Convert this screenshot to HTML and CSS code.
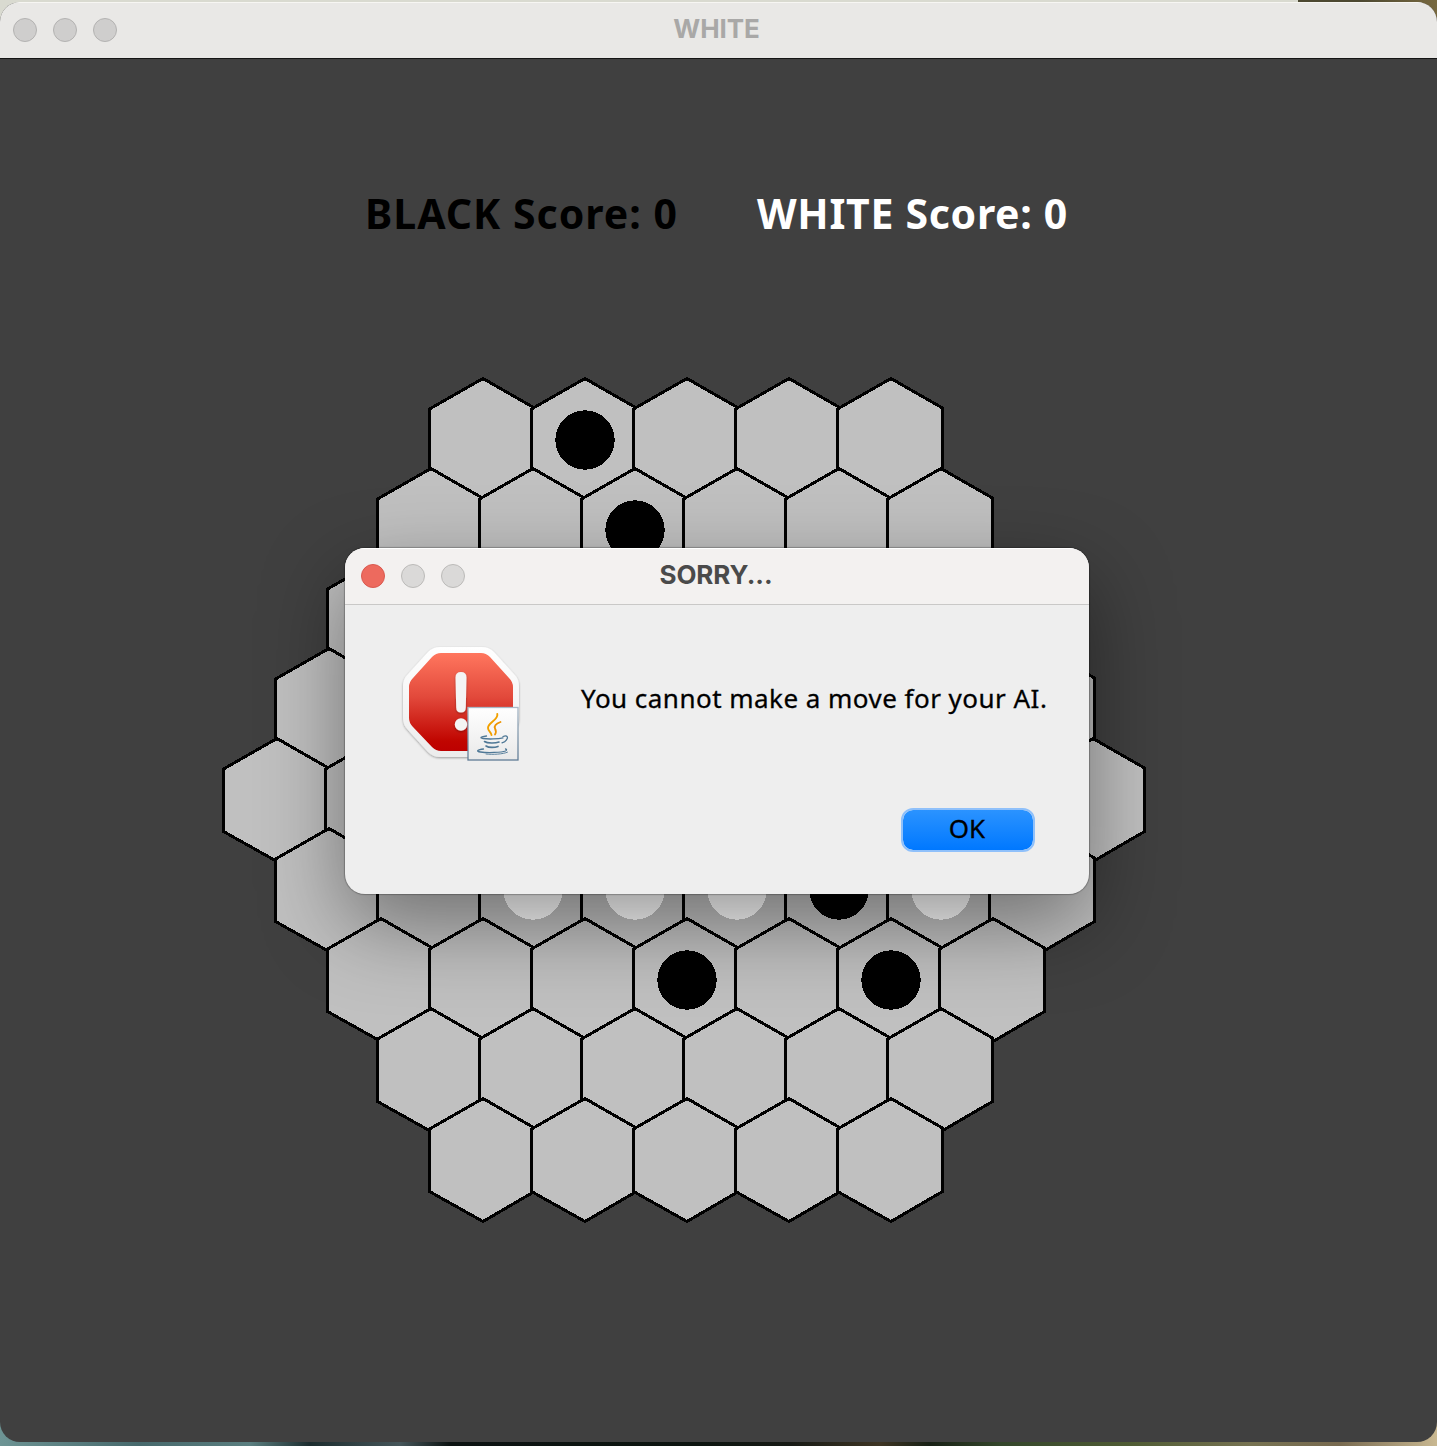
FILE: index.html
```html
<!DOCTYPE html>
<html lang="en">
<head>
<meta charset="utf-8">
<title>WHITE</title>
<link rel="stylesheet" href="styles.css">
</head>
<body>
<main class="window">
  <header class="titlebar">
    <div class="lights"><span class="light"></span><span class="light"></span><span class="light"></span></div>
    <h1 class="title">WHITE</h1>
  </header>
  <section class="game">
    <div class="scores">
      <span class="score black">BLACK Score: 0</span>
      <span class="score white">WHITE Score: 0</span>
    </div>
    <svg class="board" id="board" width="932" height="852" viewBox="218 374 932 852"></svg>
  </section>
</main>
<div class="dialog" role="dialog">
  <header class="dialog-bar">
    <div class="lights"><span class="light close"></span><span class="light"></span><span class="light"></span></div>
    <h2 class="title">SORRY...</h2>
  </header>
  <div class="dialog-body">
    <svg class="alert" width="130" height="126" viewBox="396 640 130 126">
      <defs>
        <linearGradient id="red" x1="0" y1="0" x2="0" y2="1"><stop offset="0" stop-color="#ff765e"/><stop offset=".45" stop-color="#e2493b"/><stop offset=".9" stop-color="#c00500"/><stop offset="1" stop-color="#bd0000"/></linearGradient>
        <linearGradient id="rim" x1="0" y1="0" x2="0" y2="1"><stop offset="0" stop-color="#fff"/><stop offset="1" stop-color="#ececec"/></linearGradient>
        <linearGradient id="paper" x1="0" y1="0" x2="0" y2="1"><stop offset="0" stop-color="#fff"/><stop offset="1" stop-color="#e9e9e9"/></linearGradient>
        <linearGradient id="edge" x1="0" y1="0" x2="0" y2="1"><stop offset="0" stop-color="#a9b8c6"/><stop offset="1" stop-color="#5f7b95"/></linearGradient>
        <filter id="soft" x="-20%" y="-20%" width="140%" height="140%"><feDropShadow dx="0" dy="1" stdDeviation="1.3" flood-opacity=".35"/></filter>
      </defs>
      <path filter="url(#soft)" fill="url(#rim)" d="M440 647h42q7 0 12 5l20 22q5 5 5 12v32q0 7-5 12l-20 22q-5 5-12 5h-42q-7 0-12-5l-20-22q-5-5-5-12v-32q0-7 5-12l20-22q5-5 12-5z"/>
      <path fill="url(#red)" d="M441 653h40q5 0 9 4l19 21q4 4 4 9v31q0 5-4 9l-19 20q-4 4-9 4h-40q-5 0-9-4l-19-20q-4-4-4-9v-31q0-5 4-9l19-21q4-4 9-4z"/>
      <g filter="url(#soft)" fill="#f4f4f4"><path d="M455.500 677.500q0-5.500 5.500-5.500t5.500 5.500l-.7 30q0 5-4.800 5t-4.800-5z"/><circle cx="461" cy="724.500" r="6.200"/></g>
      <rect x="468" y="707.500" width="50" height="52.500" fill="url(#paper)" stroke="url(#edge)" stroke-width="1.300"/>
      <g fill="none" stroke-linecap="round">
        <path d="M497.300 714C498.500 720 488 722.500 488 728c0 3 3.500 4.500 3.500 7" stroke="#f2a100" stroke-width="1.900"/>
        <path d="M500.500 722c-5 2-6.500 4-5.500 6.500 1.200 2.200 1.700 3.500 0 6" stroke="#ee9400" stroke-width="1.800"/>
        <g stroke="#4f7896" stroke-width="1.300">
          <path d="M486.500 736c-6 .7-7 2-3.500 2.500 5 .8 15 .6 20-.7"/>
          <path d="M503 736.500c4.500-1.800 5.500 1 3.500 3.300-1 1.500-2.800 2.500-4.500 3"/>
          <path d="M484.500 741.500c3 2 11 1.800 14.500.5M486 746c3 2 9 1.600 12 .4" stroke-width="1.600"/>
          <path d="M483.500 749c-6 .6-8 2.500-3 3 7 1 21 .6 25-1 1.800-.8 1-1.800 0-2"/>
          <path d="M486 754c7 .8 17 .2 21.500-1.800" stroke-width=".9"/>
        </g>
      </g>
    </svg>
    <p class="message">You cannot make a move for your AI.</p>
    <button class="ok" type="button"><span>OK</span></button>
  </div>
</div>
<script src="board.js"></script>
</body>
</html>
```
FILE: styles.css
```css
* { box-sizing: border-box; }
body {
  margin: 0;
  height: 1446px;
  padding-top: 2px;
  overflow: hidden;
  position: relative;
  background:
    linear-gradient(90deg, #d9dad0 0 1298px, #4c4831 1298px 1360px, #77683f 1437px) 0 0 / 100% 50px no-repeat,
    linear-gradient(90deg, #6d9494 0, #47696c 140px, #5b7f80 250px, #1c2c2e 310px, #46565a 400px, #0c1312 450px, #0d1510 700px, #171a15 790px, #3e3524 880px, #182115 930px, #34462b 1000px, #505c34 1130px, #777352 1250px, #786a50 1340px, #c9b891 1437px);
}
.window {
  height: 1440px;
  border-radius: 20px;
  overflow: hidden;
  background: #404040;
}
.titlebar, .dialog-bar {
  display: grid;
  grid-template-columns: 118px 1fr 118px;
  align-items: center;
  height: 57px;
}
.titlebar {
  padding: 0 3px 0 1px;
  background: #e9e8e6;
  border-bottom: 1px solid #151515;
  box-shadow: inset 0 1px 0 #f7f6f3;
}
.lights { display: flex; gap: 16px; padding-left: 12px; }
.light {
  width: 24px;
  height: 24px;
  border-radius: 50%;
  border: 1px solid #b3b2b1;
  background: #cfcecd;
}
.title {
  margin: 0;
  text-align: center;
  font: 700 26px/30px Inter, "Liberation Sans", sans-serif;
  color: #a9a8a7;
  letter-spacing: -.1px;
}
.titlebar .title { padding: 0 2px 2px 0; }
.scores {
  display: flex;
  gap: 81px;
  padding: 124px 0 0 365px;
  height: 315px;
  font: 700 41px/60px "Noto Sans", "Open Sans", sans-serif;
  white-space: nowrap;
}
.score { width: 311px; }
.black { color: #000; letter-spacing: 1px; }
.white { color: #fff; letter-spacing: .7px; }
.board { display: block; margin-left: 218px; shape-rendering: crispEdges; }
.hex { fill: #c0c0c0; stroke: #000; stroke-width: 3; }
.dialog {
  position: absolute;
  left: 345px;
  top: 548px;
  width: 744px;
  height: 346px;
  border-radius: 20px;
  overflow: hidden;
  background: #eee;
  box-shadow: 0 0 1px 1px rgba(0,0,0,.25), 0 30px 84px rgba(0,0,0,.42);
}
.dialog-bar {
  padding: 0 2px 0 4px;
  background: #f3f1f0;
  border-bottom: 1px solid #c9c8c7;
  box-shadow: inset 0 1px 0 #fff;
}
.dialog-bar .lights { padding-left: 12px; }
.dialog-bar .light { background: #dad9d8; border-color: #bbbab8; }
.dialog-bar .close { background: #ed6a5e; border-color: #d9594f; }
.dialog-bar .title { color: #4a4a4a; padding: 0 4px 2px 0; }
.dialog-body {
  display: grid;
  grid-template: 168px 46px / 130px 1fr;
  column-gap: 55px;
  padding: 35px 34px 0 51px;
}
.message {
  margin: 40px 0 0;
  font: 400 26px/36px "Noto Sans", "Open Sans", sans-serif;
  letter-spacing: .47px;
  -webkit-text-stroke: .3px #000;
  white-space: nowrap;
  color: #000;
}
.ok {
  grid-column: 2;
  justify-self: end;
  width: 134px;
  height: 44px;
  margin-right: 20px;
  padding: 0 2px 4px 0;
  border: 2px solid #8fc0fa;
  border-radius: 12px;
  background: linear-gradient(#2b93ff, #0078ff) padding-box;
  font: 400 26px/36px "Noto Sans", "Open Sans", sans-serif;
  -webkit-text-stroke: .3px #000;
  color: #000;
}
```
FILE: board.js
```js
const rows = [[429.5, 5], [377.5, 6], [327.5, 7], [275.5, 8], [223.5, 9], [275.5, 8], [327.5, 7], [377.5, 6], [429.5, 5]];
const pieces = [
  [585, 440, "#000"], [635, 530, "#000"],
  [533, 890, "#fff"], [635, 890, "#fff"], [737, 890, "#fff"], [839, 890, "#000"], [941, 890, "#fff"],
  [687, 980, "#000"], [891, 980, "#000"]
];
let shapes = "";
rows.forEach(([left, count], r) => {
  const y = 378.5 + 90 * r;
  for (let c = 0; c < count; c++) {
    const x = left + 102 * c;
    shapes += `<path class="hex" d="M${x + 53.5} ${y}L${x + 105} ${y + 29.5}V${y + 93}L${x + 53.5} ${y + 123}L${x} ${y + 93}V${y + 30.5}Z"/>`;
  }
});
pieces.forEach(([x, y, fill]) => {
  shapes += `<circle cx="${x}" cy="${y}" r="29.7" fill="${fill}"/>`;
});
document.getElementById("board").innerHTML = shapes;
```
